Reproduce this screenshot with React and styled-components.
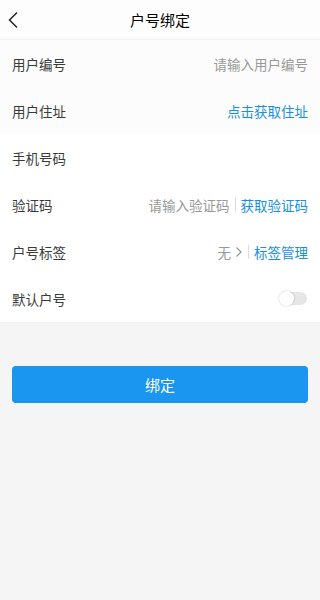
import React, { useState } from "react";
import styled, { createGlobalStyle } from "styled-components";

const GlobalStyle = createGlobalStyle`
  html, body {
    margin: 0;
    padding: 0;
    background: #f5f5f5;
    font-family: "Noto Sans CJK SC", "Noto Sans", sans-serif;
  }
`;

const Page = styled.div`
  width: 320px;
  min-height: 600px;
  background: #f5f5f5;
`;

const Header = styled.div`
  height: 40px;
  background: #fdfdfd;
  border-bottom: 1px solid #f2f2f2;
  box-sizing: border-box;
  display: flex;
  align-items: center;
  justify-content: center;
  position: relative;
`;

const Back = styled.div`
  position: absolute;
  left: 6px;
  top: 11px;
  width: 16px;
  height: 18px;
  display: flex;
`;

const Title = styled.div`
  font-size: 15px;
  color: #000;
  font-weight: 400;
`;

const Form = styled.div`
  background: #fff;
`;

const Row = styled.div`
  height: 47px;
  display: flex;
  align-items: center;
  justify-content: space-between;
  padding: 0 12px;
  background: ${(p) => (p.$tint ? "#fcfcfc" : "#fff")};
`;

const Label = styled.div`
  font-size: 13.5px;
  color: #3a3a3a;
`;

const Right = styled.div`
  display: flex;
  align-items: center;
  font-size: 13.5px;
`;

const Hint = styled.span`
  color: #999;
`;

const Action = styled.span`
  color: #1a8fe0;
`;

const Sep = styled.span`
  display: inline-block;
  width: 1px;
  height: 14px;
  background: #ddd;
  margin: 0 5px;
`;

const Arrow = styled.span`
  display: inline-flex;
  margin-left: 4px;
`;

const Track = styled.div`
  width: 27px;
  height: 13px;
  border-radius: 7px;
  background: ${(p) => (p.$on ? "#1a8fe0" : "#e6e6e6")};
  position: relative;
  margin-right: 1px;
`;

const Knob = styled.div`
  position: absolute;
  top: -1px;
  left: ${(p) => (p.$on ? "12px" : "-1px")};
  width: 15px;
  height: 15px;
  border-radius: 50%;
  background: #fff;
  box-shadow: 0 0 2px rgba(0, 0, 0, 0.25);
`;

const ButtonWrap = styled.div`
  padding: 44px 12px 0;
`;

const Button = styled.button`
  width: 100%;
  height: 37px;
  border: none;
  border-radius: 4px;
  background: #1a96f0;
  color: #fff;
  font-size: 15px;
  font-family: inherit;
`;

export default function App() {
  const [on, setOn] = useState(false);
  return (
    <Page>
      <GlobalStyle />
      <Header>
        <Back>
          <svg width="16" height="18" viewBox="0 0 16 18">
            <path d="M11 1.5 L3.5 9 L11 16.5" fill="none" stroke="#222" strokeWidth="1.5" />
          </svg>
        </Back>
        <Title>户号绑定</Title>
      </Header>
      <Form>
        <Row $tint>
          <Label>用户编号</Label>
          <Right>
            <Hint>请输入用户编号</Hint>
          </Right>
        </Row>
        <Row $tint>
          <Label>用户住址</Label>
          <Right>
            <Action>点击获取住址</Action>
          </Right>
        </Row>
        <Row>
          <Label>手机号码</Label>
        </Row>
        <Row>
          <Label>验证码</Label>
          <Right>
            <Hint>请输入验证码</Hint>
            <Sep />
            <Action>获取验证码</Action>
          </Right>
        </Row>
        <Row>
          <Label>户号标签</Label>
          <Right>
            <Hint>无</Hint>
            <Arrow>
              <svg width="8" height="12" viewBox="0 0 8 12">
                <path d="M1.5 1.5 L6 6 L1.5 10.5" fill="none" stroke="#999" strokeWidth="1.3" />
              </svg>
            </Arrow>
            <Sep />
            <Action>标签管理</Action>
          </Right>
        </Row>
        <Row>
          <Label>默认户号</Label>
          <Track $on={on} onClick={() => setOn(!on)}>
            <Knob $on={on} />
          </Track>
        </Row>
      </Form>
      <ButtonWrap>
        <Button>绑定</Button>
      </ButtonWrap>
    </Page>
  );
}
